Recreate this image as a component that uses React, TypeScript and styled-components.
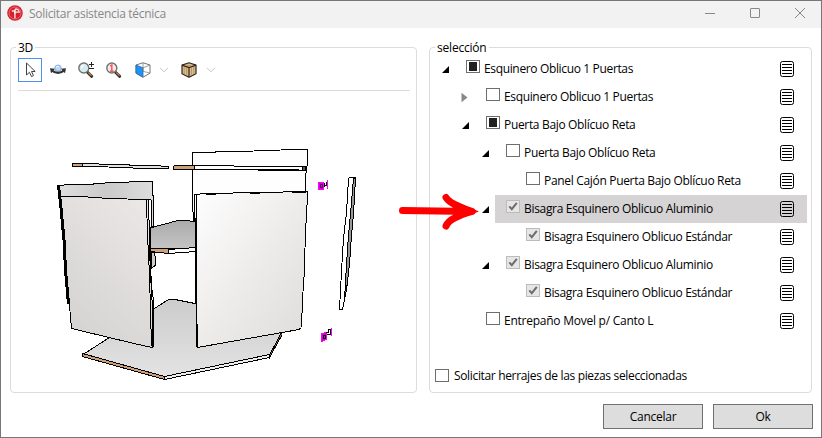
import React from "react";
import styled, { createGlobalStyle } from "styled-components";

const Global = createGlobalStyle`
  * { box-sizing: border-box; }
  body { margin: 0; background: #fff; font-family: "Open Sans", "Noto Sans", sans-serif; font-size: 12px; color: #000; }
`;

const Window = styled.div`
  position: relative;
  width: 822px;
  height: 438px;
  border: 1px solid #777;
  background: #fff;
  overflow: hidden;
  display: flex;
  flex-direction: column;
`;

const TitleBar = styled.header`
  flex: none;
  height: 27px;
  background: #f2f2f2;
  display: flex;
  align-items: center;
  padding: 0 15px 3px 6px;
  color: #888;
`;

const Text = styled.span<{ $spacing?: number }>`
  line-height: 16px;
  white-space: nowrap;
  letter-spacing: ${(p) => p.$spacing ?? -0.25}px;
`;

const Title = styled(Text)`
  flex: 1;
  margin-left: 6px;
  padding-top: 1px;
`;

const WindowControls = styled.div`
  display: flex;
  gap: 33px;
  svg { display: block; }
`;

const Panels = styled.main`
  display: flex;
  gap: 12px;
  padding: 19px 9px 0;
  height: 365px;
  flex: none;
`;

const Group = styled.section<{ $width: number }>`
  width: ${(p) => p.$width}px;
  height: 346px;
  border: 1px solid #dcdcdc;
  border-radius: 4px;
  display: flex;
  flex-direction: column;
`;

const Legend = styled(Text)`
  align-self: flex-start;
  height: 16px;
  margin: -8px 0 -1px 5px;
  padding: 0 2px;
  background: #fff;
`;

const Toolbar = styled.div`
  display: flex;
  height: 36px;
  margin: 0 6px 0 7px;
  padding-top: 3px;
  border-bottom: 1px solid #dcdcdc;
`;

const Tool = styled.button<{ $active?: boolean; $width?: number }>`
  width: ${(p) => p.$width ?? 24}px;
  height: 24px;
  padding: 0;
  display: grid;
  place-items: center;
  background: #fff;
  border: 1px solid ${(p) => (p.$active ? "#4f8ff0" : "transparent")};
  svg { display: block; overflow: visible; }
`;

const Viewport = styled.div`
  height: 300px;
  margin: 0 6px 0 7px;
  svg { display: block; }
`;

const Tree = styled.div`
  height: 280px;
  display: flex;
  flex-direction: column;
`;

const TreeRow = styled.div<{ $level: number }>`
  display: flex;
  height: 28px;
  padding: 0 4px 0 ${(p) => 11 + p.$level * 20}px;
`;

const Toggle = styled.span`
  flex: none;
  width: 14px;
  svg { display: block; }
`;

const TreeItem = styled.div<{ $selected?: boolean }>`
  flex: 1;
  display: flex;
  align-items: flex-start;
  padding: 5px 13px 0 11px;
  background: ${(p) => (p.$selected ? "#d5d3d4" : "transparent")};
`;

const Check = styled.span<{ $disabled?: boolean }>`
  flex: none;
  width: 14px;
  height: 13px;
  border: 1px solid ${(p) => (p.$disabled ? "#bcbcbc" : "#6e6e6e")};
  background: ${(p) => (p.$disabled ? "#e6e6e6" : "#fff")};
  display: grid;
  place-items: center;
  svg { display: block; }
`;

const Mark = styled.span`
  width: 8px;
  height: 9px;
  background: #202020;
`;

const ItemLabel = styled(Text)`
  flex: 1;
  margin-left: 4px;
  line-height: 17px;
`;

const ListIcon = styled.span`
  margin-top: 1px;
  svg { display: block; }
`;

const Option = styled.label`
  display: flex;
  align-items: flex-start;
  margin: 34px 0 0 5px;
  gap: 5px;
`;

const OptionText = styled(Text)`
  margin-top: -1px;
`;

const Footer = styled.footer`
  display: flex;
  justify-content: flex-end;
  gap: 10px;
  padding: 11px 8px 0 0;
`;

const Button = styled.button`
  width: 100px;
  height: 25px;
  padding: 0;
  border: 1px solid #707070;
  background: #ddd;
  font: inherit;
  color: #000;
`;

const Pointer = styled.svg`
  position: absolute;
  left: 397px;
  top: 190px;
`;

type State = "off" | "mixed" | "locked";
type Item = { label: string; level: number; state: State; toggle?: "open" | "closed"; selected?: boolean; spacing: number };

const items: Item[] = [
  { label: "Esquinero Oblicuo 1 Puertas", level: 0, state: "mixed", toggle: "open", spacing: -0.35 },
  { label: "Esquinero Oblicuo 1 Puertas", level: 1, state: "off", toggle: "closed", spacing: -0.35 },
  { label: "Puerta Bajo Oblícuo Reta", level: 1, state: "mixed", toggle: "open", spacing: -0.33 },
  { label: "Puerta Bajo Oblícuo Reta", level: 2, state: "off", toggle: "open", spacing: -0.33 },
  { label: "Panel Cajón Puerta Bajo Oblícuo Reta", level: 3, state: "off", spacing: -0.32 },
  { label: "Bisagra Esquinero Oblicuo Aluminio", level: 2, state: "locked", toggle: "open", selected: true, spacing: -0.32 },
  { label: "Bisagra Esquinero Oblicuo Estándar", level: 3, state: "locked", spacing: -0.34 },
  { label: "Bisagra Esquinero Oblicuo Aluminio", level: 2, state: "locked", toggle: "open", spacing: -0.32 },
  { label: "Bisagra Esquinero Oblicuo Estándar", level: 3, state: "locked", spacing: -0.34 },
  { label: "Entrepaño Movel p/ Canto L", level: 1, state: "off", spacing: -0.25 },
];

const Logo = () => (
  <svg width="16" height="16" viewBox="0 0 16 16">
    <circle cx="8" cy="8" r="7.8" fill="#d5202d" />
    <circle cx="8" cy="8" r="6" fill="none" stroke="#ec8a90" strokeWidth=".7" />
    <path d="M8.400 3.200q4.300.2 4.600 4.600H8.800v1.300H7V6.800H4.800V5.300H7z" fill="#fbe3e4" />
    <path d="M7 9v4.500l1.800-.3V9z" fill="#f3b5b9" />
    <path d="M8.800 4.700q2.300 0 2.800 1.900H8.800z" fill="#d5202d" />
  </svg>
);

const CursorIcon = () => (
  <svg width="22" height="22" viewBox="0 0 22 22">
    <path d="M7.500 4v12l3-2.700 2 4.300 2-1-2-4.100h3.700z" fill="#fff" stroke="#444" />
  </svg>
);

const OrbitIcon = () => (
  <svg width="18" height="16" viewBox="0 0 18 16">
    <circle cx="9" cy="6.200" r="3.200" fill="#b9d8f8" stroke="#8aabdf" />
    <path d="M7 5.200q2-1.800 3 0" fill="none" stroke="#fff" />
    <path d="M2.800 8.300Q9 13.400 15.200 8.300" fill="none" stroke="#333" strokeWidth="2.200" />
    <path d="M1 6.300l5 .4-4 4.600zM17 6.300l-5 .4 4 4.600z" fill="#333" />
  </svg>
);

const Lens = ({ one }: { one?: boolean }) => (
  <svg width="18" height="18" viewBox="0 0 18 18">
    <path d="M10.200 11l4.500 4.300" stroke="#3c3228" strokeWidth="3" strokeLinecap="round" />
    <path d="M11.300 11.600l3.200 3" stroke="#c58b42" strokeWidth="1.300" />
    <circle cx="6.800" cy="7" r="5" fill={one ? "#fbe9e9" : "#d8ecef"} stroke="#6c7473" strokeWidth="1.400" />
    {one ? (
      <path d="M5.200 5l1.600-1v6.500M5 10.200h3.800" fill="none" stroke="#f05a5a" strokeWidth="1.500" />
    ) : (
      <>
        <path d="M4.300 6.800q.4-2 2.400-2.300" fill="none" stroke="#fff" strokeWidth="1.300" />
        <path d="M12 3.500h5M14.500 1v5M12 7.500h5" stroke="#222" />
      </>
    )}
  </svg>
);

const CubeIcon = () => (
  <svg width="16" height="16" viewBox="0 0 16 16" strokeLinejoin="round">
    <path d="M8 .8l7 2.200v8.200l-7 4-7-4V3z" fill="#fff" stroke="#666" strokeWidth=".9" />
    <path d="M1 3l7 2.800v9.400l-7-4z" fill="#2492f4" stroke="#246ca8" strokeWidth=".8" />
    <path d="M8 5.800L15 3M8 1v8.300l7 1.800" fill="none" stroke="#777" strokeWidth=".7" />
  </svg>
);

const WoodIcon = () => (
  <svg width="16" height="16" viewBox="0 0 16 16" strokeLinejoin="round">
    <path d="M8 .8l7 2.300v8.600l-7 3.600-7-3.600V3.100z" fill="#dcc093" stroke="#30271b" strokeWidth="1.200" />
    <path d="M1 3.100l7 2.500 7-2.500M8 5.600v9.300" fill="none" stroke="#30271b" strokeWidth="1.200" />
    <path d="M3.200 5v6.700M5.700 6v6.800M10.400 6v6.700M12.800 5v6.700M4.500 2.800l6 1.300" stroke="#a8814c" strokeWidth=".7" />
  </svg>
);

const Chevron = () => (
  <svg width="8" height="6" viewBox="0 0 8 6">
    <path d="M0 .8L4 4.800 8 .8" fill="none" stroke="#c4c4c4" />
  </svg>
);

const Scene = () => (
  <svg width="392" height="298" viewBox="18 91 392 298" shapeRendering="crispEdges" stroke="#000" strokeWidth="1">
    <defs>
      <linearGradient id="back" x1="0" x2="1"><stop offset="0" stopColor="#e0dfdf" /><stop offset=".5" stopColor="#cacaca" /><stop offset="1" stopColor="#dedddd" /></linearGradient>
      <linearGradient id="leftDoor" x1="1" y1="0" x2=".4" y2="1"><stop offset="0" stopColor="#ece8e7" /><stop offset="1" stopColor="#d5d4d2" /></linearGradient>
      <linearGradient id="rightDoor" x1="0" y1="0" x2="1" y2="1"><stop offset="0" stopColor="#fefefe" /><stop offset=".5" stopColor="#eeeceb" /><stop offset="1" stopColor="#dddcdb" /></linearGradient>
      <linearGradient id="shelf" x2="0" y2="1"><stop offset="0" stopColor="#aaa" /><stop offset="1" stopColor="#c5c5c5" /></linearGradient>
      <linearGradient id="base" x2="0" y2="1"><stop offset="0" stopColor="#ccc" /><stop offset="1" stopColor="#e3e3e3" /></linearGradient>
    </defs>
    <path d="M83 354.500L109.500 337.500 152 310 168.500 299.500H175L195 303.500 281.500 332.500 269.500 355 165 376.500z" fill="url(#base)" />
    <path d="M82.500 353.500V356.500L164.500 379.500V376.500z" fill="#cda27b" />
    <path d="M164.500 376.500L269.500 354.500V357.500L164.500 379.500z" fill="#eee" />
    <path d="M281.500 332.500L269.500 355V357.500L282 335" fill="#9a7154" />
    <path d="M150 228L178 220.500H184L195.500 221.500V248L150 248.500z" fill="url(#shelf)" />
    <path d="M150 248.500H168.500V253.500L150 251.500z" fill="#cda27b" />
    <path d="M168.500 249.500L195.500 247.500V251.500L168.500 253.500z" fill="#fff" />
    <path d="M151 252L154 252.500 155 256V265.500L151 268.500z" fill="#ccc" />
    <path d="M58 185.500L70 184.500 93 184.500 94 183.500 117 182.500 142 181.500H152.500V194L153.500 197V226L151 227V200L60 197z" fill="url(#back)" />
    <path d="M60 196.500L81 196.500 102 198 127 199 148.500 199.500 149.500 240 152 300V347.500L134 343.500 71.500 328.500z" fill="url(#leftDoor)" />
    <path d="M148.500 199.500L149.500 240 150.500 280 153.500 300V346.500M146.500 200L147.500 235 149.500 275 151.500 346" fill="none" />
    <path d="M58.500 186L60.500 203 64 240 65.500 270 68.500 304" fill="none" strokeWidth="3" />
    <path d="M192.500 152.500H215L216 151.500 254 151 255 150.500 307.500 149.500V160L306.500 172 305.500 174V191.500L195 194.500 194 222 192.500 207z" fill="#fefefe" />
    <path d="M72.500 163.500L98 163.500 100 164.500 129 164.800 131 165.500 160 165.500 162 166.500H168.500V168.500H134L132 167.500 84 166.500H72.500z" fill="#e2e2e2" />
    <path d="M72.500 163.500H82.500V166.500H72.500zM173.500 166.500L175 165.500H194.500V169.500H173.500z" fill="#cda27b" />
    <path d="M194.500 165.500H233L235 166.500H305.500V170.500H260L258 169.500H194.500z" fill="#fff" />
    <path d="M302.500 166.500h3v4h-3z" fill="#74543d" />
    <path d="M258 170H299" strokeWidth="2" />
    <path d="M194.500 194.500L206 193.500 216 193.500 250 192.500 276 192.500 291 191.500H307.500L306.500 220 305.500 226 304.500 270 302.500 299 301.500 327.500 299 329.500 197.500 347.500 196.500 320 195.500 240z" fill="url(#rightDoor)" />
    <path d="M196.500 195V300L197.500 347M195.500 222V260L196.500 347" fill="none" />
    <path d="M206 193.500H216M250 192.500H260M292 192H306" strokeWidth="2" />
    <path d="M348.500 178.500L350 177.500H355.500L353.500 214 351.500 235 349.500 264 346.500 290 342.500 309.500H339.500L341.500 271 343.500 238 346.500 213z" fill="#fff" />
    <path d="M353.500 178.500H355.500L353.500 214 351.500 235 349.500 264 346.500 290 344.500 300 346.500 264 348.500 235 350.500 214z" fill="#999" strokeWidth="1" />
    <path d="M348.500 178V181" fill="none" />
    <path d="M318.500 182.500H323.500V189.500H318.500z" fill="#d600d6" stroke="#f0f" />
    <path d="M320.500 184.500H322.500V187.500H320.500z" fill="#d600d6" stroke="#451d49" />
    <path d="M324 185.500H326.500V181.500M324.500 183V187" fill="none" />
    <path d="M327.500 179.500V188.500" stroke="#f0f" />
    <path d="M321.500 333.500L326.500 332.500V339.500L321.500 341.500z" fill="#d600d6" stroke="#f0f" />
    <path d="M323 335.500H325V338.500H323zM327 334.500H330.500V329.500H328.500V332.500H326" fill="none" />
    <path d="M331.500 327.500V335.500" stroke="#f0f" />
  </svg>
);

const ToggleIcon = ({ kind }: { kind?: "open" | "closed" }) =>
  kind ? (
    <svg width="14" height="24" viewBox="0 0 14 24">
      {kind === "open" ? <path d="M8 11v7H1z" fill="#000" /> : <path d="M.5 9.800v9.400L6.500 14.500z" fill="#888" />}
    </svg>
  ) : null;

const CheckBox = ({ state }: { state: State }) => (
  <Check $disabled={state === "locked"}>
    {state === "mixed" && <Mark />}
    {state === "locked" && (
      <svg width="12" height="11" viewBox="0 0 12 11"><path d="M2.300 5.300L4.800 8.200 9.800 1.800" fill="none" stroke="#6d6d6d" strokeWidth="2" /></svg>
    )}
  </Check>
);

export default function App() {
  return (
    <>
      <Global />
      <Window>
        <TitleBar>
          <Logo />
          <Title $spacing={-0.3}>Solicitar asistencia técnica</Title>
          <WindowControls>
            <svg width="12" height="12"><path d="M1 6.500H11" stroke="#888" /></svg>
            <svg width="12" height="12"><rect x="1.500" y="1.500" width="9" height="9" rx=".5" fill="none" stroke="#888" /></svg>
            <svg width="12" height="12"><path d="M1 1l10 10M11 1L1 11" stroke="#888" /></svg>
          </WindowControls>
        </TitleBar>
        <Panels>
          <Group $width={407}>
            <Legend>3D</Legend>
            <Toolbar>
              <Tool $active><CursorIcon /></Tool>
              <Tool $width={32}><OrbitIcon /></Tool>
              <Tool><Lens /></Tool>
              <Tool $width={32}><Lens one /></Tool>
              <Tool $width={26}><CubeIcon /></Tool>
              <Tool $width={16}><Chevron /></Tool>
              <Tool $width={34}><WoodIcon /></Tool>
              <Tool $width={8}><Chevron /></Tool>
            </Toolbar>
            <Viewport><Scene /></Viewport>
          </Group>
          <Group $width={384}>
            <Legend $spacing={-0.2}>selección</Legend>
            <Tree>
              {items.map((item, i) => (
                <TreeRow key={i} $level={item.level}>
                  <Toggle><ToggleIcon kind={item.toggle} /></Toggle>
                  <TreeItem $selected={item.selected}>
                    <CheckBox state={item.state} />
                    <ItemLabel $spacing={item.spacing}>{item.label}</ItemLabel>
                    <ListIcon>
                      <svg width="14" height="16" viewBox="0 0 14 16">
                        <rect x=".5" y=".5" width="13" height="15" rx="2" fill="none" stroke="#000" />
                        <path d="M2 3.500H12M2 6.500H12M2 9.500H12M2 12.500H12" stroke="#000" />
                      </svg>
                    </ListIcon>
                  </TreeItem>
                </TreeRow>
              ))}
            </Tree>
            <Option><CheckBox state="off" /><OptionText $spacing={-0.34}>Solicitar herrajes de las piezas seleccionadas</OptionText></Option>
          </Group>
        </Panels>
        <Footer>
          <Button><Text>Cancelar</Text></Button>
          <Button><Text>Ok</Text></Button>
        </Footer>
        <Pointer width="84" height="42" viewBox="398 191 84 42">
          <path d="M402.500 210.500L472 211.500M446 197.500C450 204 461 207.500 472 211.500M446 226C449 219 460 215 472 211.500" fill="none" stroke="#f00" strokeWidth="7" strokeLinecap="round" />
          <path d="M457 202L479 211.500 457 219z" fill="#f00" />
        </Pointer>
      </Window>
    </>
  );
}
